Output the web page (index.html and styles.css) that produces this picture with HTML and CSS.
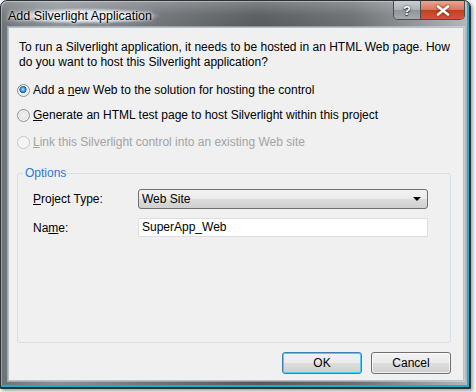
FILE: index.html
```html
<!DOCTYPE html>
<html>
<head>
<meta charset="utf-8">
<link rel="stylesheet" href="styles.css">
</head>
<body>
<div class="window">
  <div class="titlebar">
    <span class="title">Add Silverlight Application</span>
    <div class="captions">
      <span class="cap-help">?</span>
      <span class="cap-close">
        <svg width="14" height="11" viewBox="0 0 14 11"><path d="M2 1.5 L12 9.5 M12 1.5 L2 9.5" stroke="#fff" stroke-width="2.6" stroke-linecap="round"/></svg>
      </span>
    </div>
  </div>
  <div class="client">
    <p class="intro">To run a Silverlight application, it needs to be hosted in an HTML Web page. How do you want to host this Silverlight application?</p>
    <div class="choices">
      <div class="choice"><span class="radio checked"></span><span>Add a <u>n</u>ew Web to the solution for hosting the control</span></div>
      <div class="choice"><span class="radio"></span><span><u>G</u>enerate an HTML test page to host Silverlight within this project</span></div>
      <div class="choice disabled"><span class="radio"></span><span><u>L</u>ink this Silverlight control into an existing Web site</span></div>
    </div>
    <fieldset class="group">
      <legend>Options</legend>
      <div class="field">
        <span class="label"><u>P</u>roject Type:</span>
        <div class="select"><span>Web Site</span><span class="arrow"></span></div>
      </div>
      <div class="field">
        <span class="label">Na<u>m</u>e:</span>
        <div class="input">SuperApp_Web</div>
      </div>
    </fieldset>
    <div class="buttons">
      <div class="btn default">OK</div>
      <div class="btn">Cancel</div>
    </div>
  </div>
</div>
</body>
</html>
```
FILE: styles.css
```css
html, body {
  margin: 0;
  padding: 0;
  background: #f4f4f4;
}
body {
  width: 476px;
  height: 392px;
  overflow: hidden;
  font-family: "Liberation Sans", Arial, sans-serif;
  font-size: 12px;
  color: #000;
}
.window {
  box-sizing: border-box;
  width: 471px;
  height: 389px;
  display: flex;
  flex-direction: column;
  border: 1px solid #2e3134;
  border-radius: 7px 7px 0 0;
  background:
    linear-gradient(180deg, rgba(255,255,255,0.25) 0px, rgba(255,255,255,0.05) 14px, rgba(0,0,0,0) 27px),
    linear-gradient(90deg, #6c7278 0%, #8a9096 12%, #6c7176 35%, #55595d 55%, #6a6e72 75%, #9aa0a5 92%, #b3b8bc 100%);
  box-shadow: inset -1px -1px 0 #2a2c2e, inset -3px -3px 0 #27a8cf, inset 1px 1px 0 rgba(255,255,255,0.35), 2px 2px 3px rgba(0,0,0,0.3);
  padding: 0 5px 7px 7px;
}
.titlebar {
  height: 26px;
  display: flex;
  align-items: flex-start;
}
.title {
  margin-top: 7px;
  font-size: 12.5px;
  line-height: 16px;
  padding: 0 8px 0 0;
  background: radial-gradient(ellipse at center, rgba(240,244,248,0.85) 40%, rgba(240,244,248,0) 72%);
  text-shadow: 0 0 6px #fff, 0 0 3px #fff;
}
.captions {
  margin-left: auto;
  display: flex;
  height: 18px;
  border: 1px solid #4a4d50;
  border-top: none;
  border-radius: 0 0 5px 5px;
  overflow: hidden;
}
.cap-help {
  width: 26px;
  display: flex;
  align-items: center;
  justify-content: center;
  color: #fff;
  font-weight: bold;
  font-size: 13px;
  text-shadow: 0 0 2px #333, 0 1px 1px #222;
  background: linear-gradient(180deg, #c9ced3 0%, #aab0b6 50%, #8f959b 51%, #a4aab0 100%);
  border-right: 1px solid #4a4d50;
}
.cap-close {
  width: 43px;
  display: flex;
  align-items: center;
  justify-content: center;
  background: linear-gradient(180deg, #e9a791 0%, #d9735a 50%, #c3401f 51%, #d0553a 100%);
}
.cap-close svg { filter: drop-shadow(0 0 1px #5a1505); }
.client {
  flex: 1;
  display: flex;
  flex-direction: column;
  background: #f0f0f0;
  border: 1px solid #b9c1c8;
  box-shadow: 0 0 0 1px rgba(255,255,255,0.35);
  padding: 12px 12px 6px 8px;
  margin-right: 1px;
}
.intro {
  margin: 0 0 0 2px;
  line-height: 15px;
}
.choices {
  display: flex;
  flex-direction: column;
  gap: 10px;
  margin-top: 13px;
}
.choice {
  display: flex;
  align-items: center;
  gap: 3px;
  line-height: 15px;
}
.choice.disabled {
  color: #a3a3a3;
  margin-top: 2px;
}
.radio {
  box-sizing: border-box;
  width: 13px;
  height: 13px;
  border-radius: 50%;
  border: 1px solid #8e8f8f;
  background: radial-gradient(circle at 50% 50%, #f4f4f4 0%, #e3e3e3 55%, #d2d2d2 100%);
  box-shadow: inset 0 0 0 1px #f8f8f8;
  flex: none;
}
.radio.checked {
  background:
    radial-gradient(circle at 45% 40%, #b9ecff 0px, #3a9ae0 2px, #0f5aa8 3.4px, rgba(15,90,168,0) 3.8px),
    radial-gradient(circle, #f4f4f4 0%, #dcdcdc 100%);
}
.choice.disabled .radio {
  border-color: #c5c5c5;
  background: #f4f4f4;
}
.group {
  flex: 1;
  margin: 16px 0 0 0;
  padding: 8px 22px 0 15px;
  border: 1px solid #d5dfe5;
  border-radius: 3px;
  min-width: 0;
}
.group legend {
  color: #2a78e0;
  padding: 0 2px;
  margin-left: -10px;
  line-height: 15px;
}
.field {
  display: flex;
  align-items: center;
  margin-bottom: 9px;
}
.label {
  width: 105px;
  flex: none;
}
.select {
  box-sizing: border-box;
  flex: 1;
  height: 20px;
  display: flex;
  align-items: center;
  justify-content: space-between;
  padding: 0 6px 0 3px;
  border: 1px solid #707070;
  border-radius: 3px;
  background: linear-gradient(180deg, #f2f2f2 0%, #ebebeb 50%, #dddddd 51%, #cfcfcf 100%);
}
.arrow {
  width: 0;
  height: 0;
  border-left: 4px solid transparent;
  border-right: 4px solid transparent;
  border-top: 4px solid #000;
}
.input {
  box-sizing: border-box;
  flex: 1;
  height: 19px;
  line-height: 17px;
  padding: 0 3px;
  background: #fff;
  border: 1px solid #dbdfe6;
}
.buttons {
  display: flex;
  justify-content: flex-end;
  gap: 9px;
  margin-top: 9px;
}
.btn {
  box-sizing: border-box;
  width: 80px;
  height: 22px;
  display: flex;
  align-items: center;
  justify-content: center;
  border: 1px solid #707070;
  border-radius: 3px;
  background: linear-gradient(180deg, #f2f2f2 0%, #ebebeb 50%, #dddddd 51%, #cfcfcf 100%);
  box-shadow: inset 0 0 0 1px rgba(255,255,255,0.7);
}
.btn.default {
  border-color: #3c7fb1;
  box-shadow: inset 0 0 0 1px #48d0f8;
}
```
